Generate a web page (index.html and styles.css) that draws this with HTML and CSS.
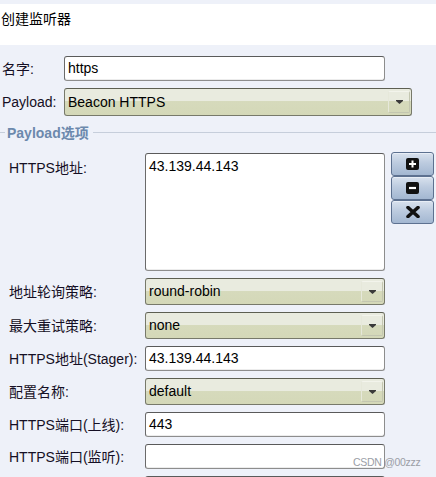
FILE: index.html
```html
<!DOCTYPE html>
<html lang="zh-CN">
<head>
<meta charset="utf-8">
<title>创建监听器</title>
<link rel="stylesheet" href="styles.css">
</head>
<body>
<div class="title">创建监听器</div>

<div class="basic">
  <label class="lbl">名字:</label>
  <div class="field name-field">https</div>
  <label class="lbl">Payload:</label>
  <div class="select payload-select">
    <span class="select-text">Beacon HTTPS</span>
    <span class="drop"><svg width="7" height="4" viewBox="0 0 7 4"><path d="M0 0h7v1L3.5 4 0 1z" fill="#3a3a3a"/></svg></span>
  </div>
</div>

<div class="section-head"><span class="legend">Payload选项</span></div>

<div class="options">
  <label class="lbl lbl-top">HTTPS地址:</label>
  <div class="field area">43.139.44.143</div>
  <div class="btns">
    <button class="icon-btn" type="button" title="添加">
      <svg width="13" height="12" viewBox="0 0 13 12"><rect x="0" y="0" width="13" height="12" rx="2" fill="#111"/><path d="M6.5 2.5v7M3 6h7" stroke="#fff" stroke-width="2"/></svg>
    </button>
    <button class="icon-btn" type="button" title="删除">
      <svg width="13" height="12" viewBox="0 0 13 12"><rect x="0" y="0" width="13" height="12" rx="2" fill="#111"/><path d="M3 6h7" stroke="#fff" stroke-width="2.2"/></svg>
    </button>
    <button class="icon-btn" type="button" title="清空">
      <svg width="14" height="12" viewBox="0 0 14 12"><path d="M2 1.5l10 9M12 1.5l-10 9" stroke="#111" stroke-width="3.6" stroke-linecap="round"/></svg>
    </button>
  </div>

  <label class="lbl">地址轮询策略:</label>
  <div class="select">
    <span class="select-text">round-robin</span>
    <span class="drop"><svg width="7" height="4" viewBox="0 0 7 4"><path d="M0 0h7v1L3.5 4 0 1z" fill="#3a3a3a"/></svg></span>
  </div>
  <span></span>

  <label class="lbl">最大重试策略:</label>
  <div class="select">
    <span class="select-text">none</span>
    <span class="drop"><svg width="7" height="4" viewBox="0 0 7 4"><path d="M0 0h7v1L3.5 4 0 1z" fill="#3a3a3a"/></svg></span>
  </div>
  <span></span>

  <label class="lbl">HTTPS地址(Stager):</label>
  <div class="field">43.139.44.143</div>
  <span></span>

  <label class="lbl">配置名称:</label>
  <div class="select">
    <span class="select-text">default</span>
    <span class="drop"><svg width="7" height="4" viewBox="0 0 7 4"><path d="M0 0h7v1L3.5 4 0 1z" fill="#3a3a3a"/></svg></span>
  </div>
  <span></span>

  <label class="lbl">HTTPS端口(上线):</label>
  <div class="field">443</div>
  <span></span>

  <label class="lbl">HTTPS端口(监听):</label>
  <div class="field"></div>
  <span></span>

  <span></span>
  <div class="field"></div>
  <span></span>
</div>

<div class="watermark">CSDN @00zzz</div>
</body>
</html>
```

FILE: styles.css
```css
body {
  margin: 0;
  background: #eef1f9;
  font: 14px "Liberation Sans", "Noto Sans CJK SC", sans-serif;
  color: #111;
  overflow: hidden;
}

.title {
  margin-top: 4px;
  height: 41px;
  box-sizing: border-box;
  padding: 5px 0 0 1px;
  background: #fff;
  line-height: 20px;
  color: #000;
}

/* top rows: name + payload */
.basic {
  display: grid;
  grid-template-columns: 62px auto;
  justify-content: start;
  row-gap: 7px;
  padding: 11px 0 0 2px;
}

.lbl {
  align-self: center;
  color: #150f24;
  line-height: 16px;
  white-space: nowrap;
}

.lbl-top {
  align-self: start;
  margin-top: 7px;
}

.field {
  box-sizing: border-box;
  height: 25px;
  padding: 0 3px;
  border: 1px solid #8d8d8d;
  border-top-color: #5a5a5a;
  border-left-color: #6a6a6a;
  border-radius: 3px;
  background: #fff;
  line-height: 23px;
  color: #000;
  box-shadow: inset 0 -1px 0 #ececec;
}

.name-field { width: 321px; }

.select {
  box-sizing: border-box;
  display: flex;
  height: 27px;
  border: 1px solid #77796a;
  border-top-color: #5d5f52;
  border-radius: 3px;
  background: linear-gradient(#e9ebdf 0, #e9ebdf 47%, #d6dabc 47%, #d4d8b8 100%);
  line-height: 25px;
  color: #000;
}

.payload-select {
  width: 348px;
  height: 28px;
  line-height: 26px;
}

.select-text {
  flex: 1;
  padding-left: 3px;
}

.drop {
  width: 20px;
  margin: 2px 1px 2px 0;
  border: 1px solid #c3c6b0;
  border-top-color: #f3f4ec;
  border-left-color: #e6e8da;
  border-radius: 2px;
  display: flex;
  align-items: center;
  justify-content: center;
}

/* section divider with legend */
.section-head {
  display: flex;
  align-items: center;
  height: 20px;
  margin-top: 6px;
}

.section-head::before {
  content: "";
  width: 5px;
  border-top: 1px solid #c6cedb;
  margin-right: 2px;
}

.section-head::after {
  content: "";
  flex: 1;
  border-top: 1px solid #c6cedb;
  margin-left: 4px;
}

.legend {
  font-weight: bold;
  color: #6c89ad;
}

/* options grid */
.options {
  display: grid;
  grid-template-columns: 136px 240px 49px;
  row-gap: 7px;
  padding: 11px 0 0 9px;
}

.area {
  height: 118px;
  padding: 4px 3px;
  line-height: 16px;
}

.btns {
  display: flex;
  flex-direction: column;
  margin-left: 6px;
  margin-top: -1px;
  align-self: start;
}

.icon-btn {
  width: 43px;
  height: 24px;
  padding: 0;
  border: 1px solid #5d7190;
  border-radius: 3px;
  background: linear-gradient(#d9e2ee, #bccbdf 45%, #a3b7d1 100%);
  display: flex;
  align-items: center;
  justify-content: center;
  box-shadow: inset 0 1px 0 #e8eef6;
}

.watermark {
  position: absolute;
  left: 353px;
  top: 456px;
  font-size: 10.5px;
  color: #9b9ea6;
  letter-spacing: -0.3px;
}
```
